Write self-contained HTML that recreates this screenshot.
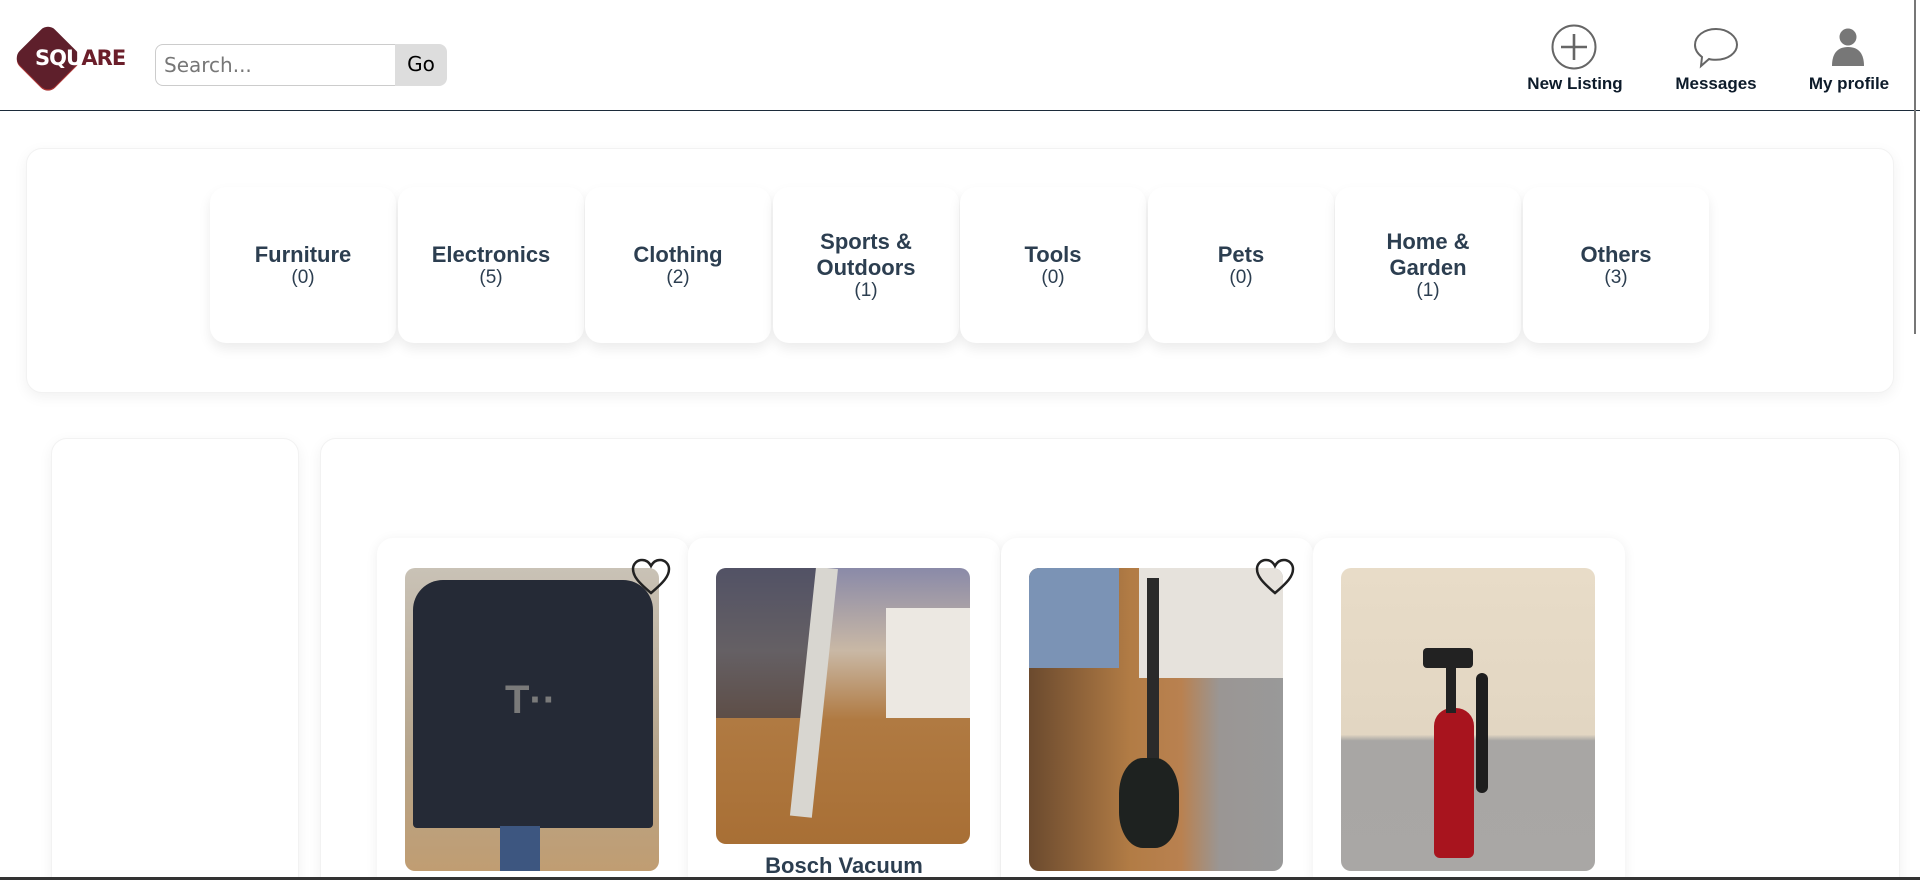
<!DOCTYPE html>
<html><head><meta charset="utf-8">
<style>
*{box-sizing:border-box;margin:0;padding:0}
html,body{width:1920px;height:880px;overflow:hidden;background:#fff;font-family:"Liberation Sans",Arial,sans-serif}
#wrap{position:relative;width:1920px;height:880px;overflow:hidden}
.header{position:absolute;left:0;top:0;width:1920px;height:111px;border-bottom:1px solid #1c2b3a;background:#fff}
.diamond{position:absolute;left:23px;top:33px;width:50px;height:50px;background:#5e1f2b;border-radius:10px;transform:rotate(45deg);box-shadow:1px 1px 0 #a33}
.logotext{position:absolute;left:35px;top:46px;font-family:"DejaVu Sans","Liberation Sans",sans-serif;font-weight:bold;font-size:21px;letter-spacing:-1px;color:#fff}
.logotext span{color:#6b1e2a}
.search{position:absolute;left:155px;top:44px;width:240px;height:42px;border:1px solid #ccc;border-right:none;border-radius:8px 0 0 8px;font-family:"DejaVu Sans",sans-serif;font-size:20px;color:#777;padding:8px 0 0 8px}
.go{position:absolute;left:395px;top:44px;width:52px;height:42px;background:#ddd;border-radius:0 8px 8px 0;font-family:"DejaVu Sans",sans-serif;font-size:20px;color:#000;text-align:center;padding-top:8px}
.nav{position:absolute;top:74px;font-weight:bold;font-size:17px;color:#0d1b2a;text-align:center;width:140px}
.icon{position:absolute}
.panel{position:absolute;background:#fff;border-radius:16px;box-shadow:0 4px 14px rgba(0,0,0,0.06);border:1px solid #f2f2f2}
.cat{position:absolute;top:187px;width:186px;height:156px;background:#fff;border-radius:16px;box-shadow:0 6px 12px rgba(0,0,0,0.08);display:flex;flex-direction:column;align-items:center;justify-content:center;color:#2c3e50;text-align:center}
.cat b{font-size:22px;line-height:26px}
.cat i{font-style:normal;font-size:19px;line-height:20px}
.card{position:absolute;top:538px;width:312px;height:342px;background:#fff;border-radius:16px 16px 0 0;box-shadow:0 2px 12px rgba(0,0,0,0.07);overflow:hidden}
.img{position:absolute;left:28px;top:30px;width:254px;height:303px;border-radius:10px;overflow:hidden}
.heart{position:absolute}
.ttl{position:absolute;left:0;width:312px;text-align:center;font-weight:bold;font-size:22px;line-height:26px;color:#2c3e50}
</style></head><body><div id="wrap">
<div class="header">
  <div class="diamond"></div>
  <div class="logotext">SQU<span>ARE</span></div>
  <div class="search">Search...</div>
  <div class="go">Go</div>
  <svg class="icon" style="left:1550px;top:23px" width="50" height="50" viewBox="0 0 50 50"><circle cx="24" cy="24" r="21.5" fill="none" stroke="#666" stroke-width="2"/><path d="M24 11V37M11 24H37" stroke="#666" stroke-width="2.6"/></svg>
  <div class="nav" style="left:1505px">New Listing</div>
  <svg class="icon" style="left:1692px;top:26px" width="48" height="44" viewBox="0 0 48 44"><path d="M24 3C12 3 3 10 3 19c0 5 3 9 7 12l-1 9 8-7c2 .6 4 .8 7 .8 12 0 21-7 21-15S36 3 24 3z" fill="none" stroke="#666" stroke-width="2"/></svg>
  <div class="nav" style="left:1646px">Messages</div>
  <svg class="icon" style="left:1830px;top:28px" width="36" height="40" viewBox="0 0 36 40"><circle cx="18" cy="9" r="8.5" fill="#777"/><path d="M2 38c0-12 5-19 16-19s16 7 16 19z" fill="#777"/></svg>
  <div class="nav" style="left:1779px">My profile</div>
</div>
<div style="position:absolute;left:1914px;top:0;width:2px;height:334px;background:#777"></div>

<div class="panel" style="left:26px;top:148px;width:1868px;height:245px"></div>
<div class="cat" style="left:210px"><b>Furniture</b><i>(0)</i></div>
<div class="cat" style="left:398px"><b>Electronics</b><i>(5)</i></div>
<div class="cat" style="left:585px"><b>Clothing</b><i>(2)</i></div>
<div class="cat" style="left:773px"><b>Sports &amp;<br>Outdoors</b><i>(1)</i></div>
<div class="cat" style="left:960px"><b>Tools</b><i>(0)</i></div>
<div class="cat" style="left:1148px"><b>Pets</b><i>(0)</i></div>
<div class="cat" style="left:1335px"><b>Home &amp;<br>Garden</b><i>(1)</i></div>
<div class="cat" style="left:1523px"><b>Others</b><i>(3)</i></div>

<div class="panel" style="left:51px;top:438px;width:248px;height:442px;border-radius:16px 16px 0 0"></div>
<div class="panel" style="left:320px;top:438px;width:1580px;height:442px;border-radius:16px 16px 0 0"></div>

<div class="card" style="left:377px">
  <div class="img" style="background:linear-gradient(180deg,#c9c2b6 0%,#b6a58c 60%,#c09d72 100%)">
    <div style="position:absolute;left:8px;top:12px;width:240px;height:248px;background:#252a36;border-radius:30px 30px 4px 4px"></div>
    <div style="position:absolute;left:100px;top:110px;width:50px;height:40px;color:#7a7a7a;font-size:40px;font-weight:bold">T··</div>
    <div style="position:absolute;left:95px;top:258px;width:40px;height:46px;background:#3d5680"></div>
  </div>
  <svg class="heart" style="left:253px;top:20px" width="42" height="38" viewBox="0 0 42 38"><path d="M21 35C8 24 3 18 3 11 3 6 7 2 12 2c4 0 7 2 9 6 2-4 5-6 9-6 5 0 9 4 9 9 0 7-5 13-18 24z" fill="none" stroke="#222" stroke-width="2.5"/></svg>
</div>
<div class="card" style="left:688px">
  <div class="img" style="height:276px;background:linear-gradient(180deg,#8a8aa8 0%,#c9b8a5 30%,#b07a42 55%,#a86f35 100%)">
    <div style="position:absolute;left:0;top:0;width:100px;height:150px;background:#3a3a48;opacity:.7"></div>
    <div style="position:absolute;left:170px;top:40px;width:84px;height:110px;background:#ece8e2"></div>
    <div style="position:absolute;left:100px;top:0;width:22px;height:250px;background:#d8d6d0;transform:rotate(6deg);transform-origin:top"></div>
  </div>
  <div class="ttl" style="top:315px">Bosch Vacuum</div>
</div>
<div class="card" style="left:1001px">
  <div class="img" style="background:linear-gradient(90deg,#6b4a2e 0%,#b27c45 40%,#b98150 60%,#9a9694 75%,#999 100%)">
    <div style="position:absolute;left:0;top:0;width:90px;height:100px;background:#7b93b5"></div>
    <div style="position:absolute;left:110px;top:0;width:144px;height:110px;background:#e6e2dc"></div>
    <div style="position:absolute;left:118px;top:10px;width:12px;height:230px;background:#2a2a2a"></div>
    <div style="position:absolute;left:90px;top:190px;width:60px;height:90px;background:#1e2220;border-radius:40%"></div>
  </div>
  <svg class="heart" style="left:253px;top:20px" width="42" height="38" viewBox="0 0 42 38"><path d="M21 35C8 24 3 18 3 11 3 6 7 2 12 2c4 0 7 2 9 6 2-4 5-6 9-6 5 0 9 4 9 9 0 7-5 13-18 24z" fill="none" stroke="#222" stroke-width="2.5"/></svg>
</div>
<div class="card" style="left:1313px">
  <div class="img" style="background:linear-gradient(180deg,#e8dcc8 0%,#e2d6c2 55%,#a8a6a4 57%,#a9a7a5 100%)">
    <div style="position:absolute;left:93px;top:140px;width:40px;height:150px;background:#a8141e;border-radius:18px 18px 6px 6px"></div>
    <div style="position:absolute;left:82px;top:80px;width:50px;height:20px;background:#222;border-radius:4px"></div>
    <div style="position:absolute;left:105px;top:95px;width:10px;height:50px;background:#222"></div>
    <div style="position:absolute;left:135px;top:105px;width:12px;height:120px;background:#1e1e1e;border-radius:6px"></div>
  </div>
</div>
<div style="position:absolute;left:0;top:877px;width:1920px;height:3px;background:#333"></div>
</div></body></html>
